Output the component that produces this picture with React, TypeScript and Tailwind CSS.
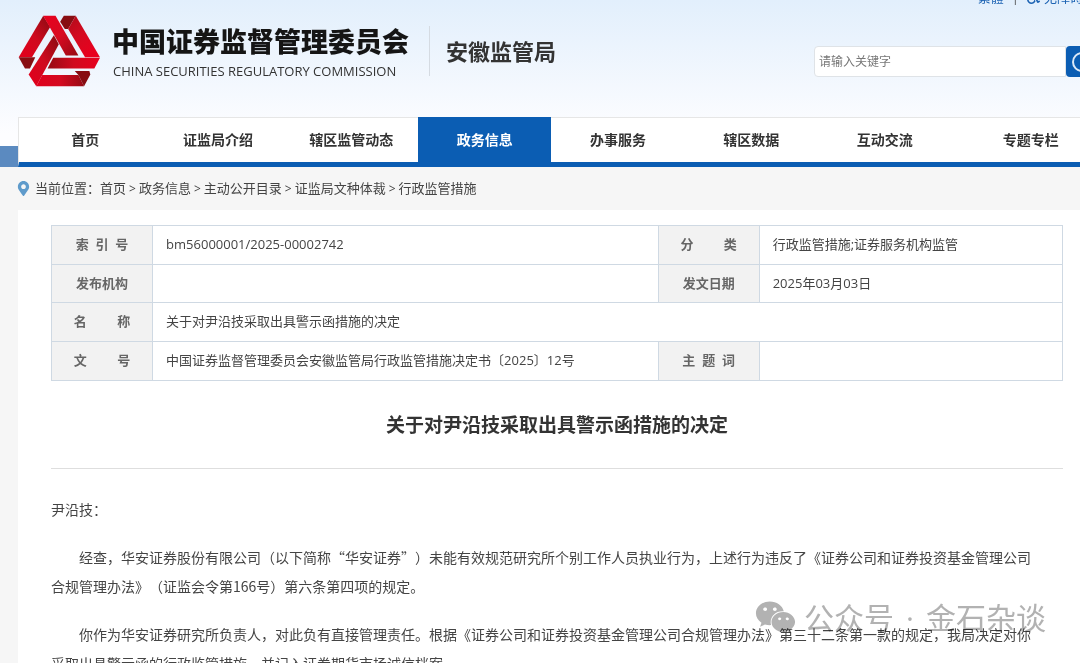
import { FaMapMarkerAlt, FaWeixin, FaWheelchair } from "react-icons/fa";

const NAV_ITEMS = [
  { label: "首页" },
  { label: "证监局介绍" },
  { label: "辖区监管动态" },
  { label: "政务信息", active: true },
  { label: "办事服务" },
  { label: "辖区数据" },
  { label: "互动交流" },
  { label: "专题专栏" },
];

const CRUMBS = ["首页", "政务信息", "主动公开目录", "证监局文种体裁", "行政监管措施"];

const WIDE_GAP = "\u00a0".repeat(9);
const GAP = "\u00a0\u00a0";

const TH = "border border-[#cfd9e3] bg-[#f2f2f2] p-0 text-center font-bold text-[#666]";
const TD = "border border-[#cfd9e3] px-[13px] py-0 text-left text-[#444]";

function Logo() {
  return (
    <svg viewBox="52 46 250 217" className="h-[72px] w-[83px] shrink-0" aria-hidden="true">
      <defs>
        <linearGradient id="arm" x1="1" y1="0" x2="0" y2="1">
          <stop offset="0.1" stopColor="#960b14" />
          <stop offset="0.5" stopColor="#cf0a1e" />
          <stop offset="0.9" stopColor="#e0001c" />
        </linearGradient>
        <linearGradient id="strap" x1="0" y1="0" x2="1" y2="1">
          <stop offset="0" stopColor="#e8001e" />
          <stop offset="0.5" stopColor="#d80a20" />
          <stop offset="1" stopColor="#960b14" />
        </linearGradient>
        <linearGradient id="bar" x1="0" y1="0" x2="1" y2="0">
          <stop offset="0" stopColor="#960b14" />
          <stop offset="0.5" stopColor="#d00a1e" />
          <stop offset="1" stopColor="#e8001e" />
        </linearGradient>
        <linearGradient id="base" x1="0" y1="0" x2="1" y2="0">
          <stop offset="0" stopColor="#e0001c" />
          <stop offset="0.5" stopColor="#d40a20" />
          <stop offset="1" stopColor="#960b14" />
        </linearGradient>
        <linearGradient id="side" x1="0" y1="0" x2="0.6" y2="1">
          <stop offset="0" stopColor="#b00c1a" />
          <stop offset="0.5" stopColor="#d40a20" />
          <stop offset="1" stopColor="#e8001e" />
        </linearGradient>
      </defs>
      <path d="M128 48 L149 82 L94 173 H54 Z" fill="url(#arm)" />
      <path d="M128 48 H165 L234 168 H196 Z" fill="url(#strap)" />
      <path d="M54 173 H104 L88 207 H73 Z" fill="#870d12" />
      <path d="M190 48 H226 L203 88 H193 L179 66 Z" fill="#870d12" />
      <path d="M226 48 L299 173 H254 L203 88 Z" fill="url(#side)" />
      <path d="M299 175 L282 207 H141 L158 175 Z" fill="url(#bar)" />
      <path d="M160 107 L175 134 L107 261 L84 225 Z" fill="url(#arm)" />
      <path d="M125 227 H234 L251 261 H107 Z" fill="url(#base)" />
      <path d="M223 215 H267 L270 225 L251 261 L234 227 Z" fill="#870d12" />
    </svg>
  );
}

function Header() {
  return (
    <div className="-mr-[18px] ml-[18px] flex h-[117px] items-start">
      <div className="flex flex-1 items-center pt-[15px]">
        <Logo />
        <div className="ml-3 flex flex-col">
          <span className="-ml-px pt-[2px] text-[27px] leading-9 font-black text-[#151515]">中国证券监督管理委员会</span>
          <span className="mt-px font-['Open_Sans','Noto_Sans',sans-serif] text-[13px] leading-5 text-[#333]">
            CHINA SECURITIES REGULATORY COMMISSION
          </span>
        </div>
        <div className="ml-5 h-[50px] w-px bg-[#d5dbe2]" />
        <span className="ml-4 text-[22px] leading-8 font-bold text-[#333]">安徽监管局</span>
      </div>
      <div className="flex flex-col">
        <div className="-mt-[13px] flex items-center justify-end gap-2 pr-[15px] text-[13px] leading-5 text-[#1c63b3]">
          <a href="#">繁體</a>
          <span className="text-[#555]">|</span>
          <a href="#" className="flex items-center gap-1 whitespace-nowrap">
            <FaWheelchair className="size-[13px]" />
            无障碍
          </a>
        </div>
        <form className="mt-[39px] flex h-[31px]">
          <input
            type="text"
            aria-label="搜索"
            placeholder="请输入关键字"
            className="w-[252px] rounded-l border border-[#dfe3e7] bg-white px-1 pt-px text-xs text-[#333] outline-none placeholder:text-[#777]"
          />
          <button type="button" aria-label="提交搜索" className="flex w-8 items-center justify-center rounded bg-[#0b5db3]">
            <svg viewBox="0 0 22 22" className="size-[22px]" fill="none" stroke="#dce9f7" strokeWidth="2">
              <circle cx="11" cy="11" r="9" />
              <path d="M17 17 L22 22" />
            </svg>
          </button>
        </form>
      </div>
    </div>
  );
}

function Nav() {
  return (
    <div className="flex items-end">
      <div className="h-[21px] w-[18px] shrink-0 bg-[#5b8ac0]" />
      <nav className="-mr-[18px] grid h-[50px] flex-1 grid-cols-[repeat(7,minmax(0,10fr))_11fr] bg-white">
        {NAV_ITEMS.map((item) => (
          <a
            key={item.label}
            href="#"
            className={
              item.active
                ? "border-y border-b-[5px] border-[#0b5db3] bg-[#0b5db3] text-center text-sm leading-[44px] font-bold text-white"
                : "border-t border-b-[5px] border-t-[#e6e6e6] border-b-[#0b5db3] text-center text-sm leading-[44px] font-bold text-[#333] first:border-l first:border-l-[#e6e6e6] last:pl-3"
            }
          >
            {item.label}
          </a>
        ))}
      </nav>
    </div>
  );
}

function Breadcrumb() {
  return (
    <div className="ml-4 flex h-[43px] items-center text-[13px] text-[#444]">
      <FaMapMarkerAlt className="mr-1 size-[15px] text-[#5f9bcb]" />
      <span>当前位置：</span>
      {CRUMBS.map((crumb, i) => (
        <span key={crumb} className="flex">
          {i > 0 ? <span className="px-[3px] text-xs leading-5">&gt;</span> : null}
          <a href="#">{crumb}</a>
        </span>
      ))}
    </div>
  );
}

function MetaTable() {
  return (
    <table className="w-full table-fixed border-collapse text-[13px]">
      <colgroup>
        <col className="w-[10%]" />
        <col className="w-[50%]" />
        <col className="w-[10%]" />
        <col className="w-[30%]" />
      </colgroup>
      <tbody>
        <tr className="h-[39px]">
          <th className={TH}>索{GAP}引{GAP}号</th>
          <td className={TD}>bm56000001/2025-00002742</td>
          <th className={TH}>分{WIDE_GAP}类</th>
          <td className={TD}>行政监管措施;证券服务机构监管</td>
        </tr>
        <tr className="h-[38px]">
          <th className={TH}>发布机构</th>
          <td className={TD} />
          <th className={TH}>发文日期</th>
          <td className={TD}>2025年03月03日</td>
        </tr>
        <tr className="h-[39px]">
          <th className={TH}>名{WIDE_GAP}称</th>
          <td className={TD} colSpan={3}>关于对尹沿技采取出具警示函措施的决定</td>
        </tr>
        <tr className="h-[39px]">
          <th className={TH}>文{WIDE_GAP}号</th>
          <td className={TD}>中国证券监督管理委员会安徽监管局行政监管措施决定书〔2025〕12号</td>
          <th className={TH}>主{GAP}题{GAP}词</th>
          <td className={TD} />
        </tr>
      </tbody>
    </table>
  );
}

function Article() {
  return (
    <article>
      <h1 className="mt-7 border-b border-[#dedede] pb-[27px] text-center text-[19px] leading-8 font-bold text-[#333]">
        关于对尹沿技采取出具警示函措施的决定
      </h1>
      <div className="mt-[26px] space-y-[19px] font-['Noto_Sans_CJK_SC',sans-serif] text-sm leading-[29px] whitespace-nowrap text-[#444] [text-spacing-trim:space-all]">
        <p>尹沿技：</p>
        <p className="indent-7">
          经查，华安证券股份有限公司（以下简称“华安证券”）未能有效规范研究所个别工作人员执业行为，上述行为违反了《证券公司和证券投资基金管理公司
          <br />
          合规管理办法》（证监会令第166号）第六条第四项的规定。
        </p>
        <p className="indent-7">
          你作为华安证券研究所负责人，对此负有直接管理责任。根据《证券公司和证券投资基金管理公司合规管理办法》第三十二条第一款的规定，我局决定对你
          <br />
          采取出具警示函的行政监管措施，并记入证券期货市场诚信档案。
        </p>
      </div>
    </article>
  );
}

export default function App() {
  return (
    <div className="relative h-screen overflow-hidden bg-[#f6f6f6] font-['Open_Sans','Noto_Sans_CJK_SC',sans-serif]">
      <header className="bg-linear-to-b from-[#e2effc] to-[#fdfdff] to-80%">
        <Header />
        <Nav />
      </header>
      <Breadcrumb />
      <main className="-mr-[18px] ml-[18px] min-h-screen bg-white px-[33px] pt-[15px] pr-[35px]">
        <MetaTable />
        <Article />
      </main>
      <div className="absolute right-[34px] bottom-[25px] flex items-center gap-2 text-[#b2b2b2] mix-blend-multiply">
        <FaWeixin className="size-[41px]" />
        <span className="flex gap-3 text-[30px] leading-10 whitespace-nowrap">
          <span>公众号</span>
          <span>·</span>
          <span>金石杂谈</span>
        </span>
      </div>
    </div>
  );
}
